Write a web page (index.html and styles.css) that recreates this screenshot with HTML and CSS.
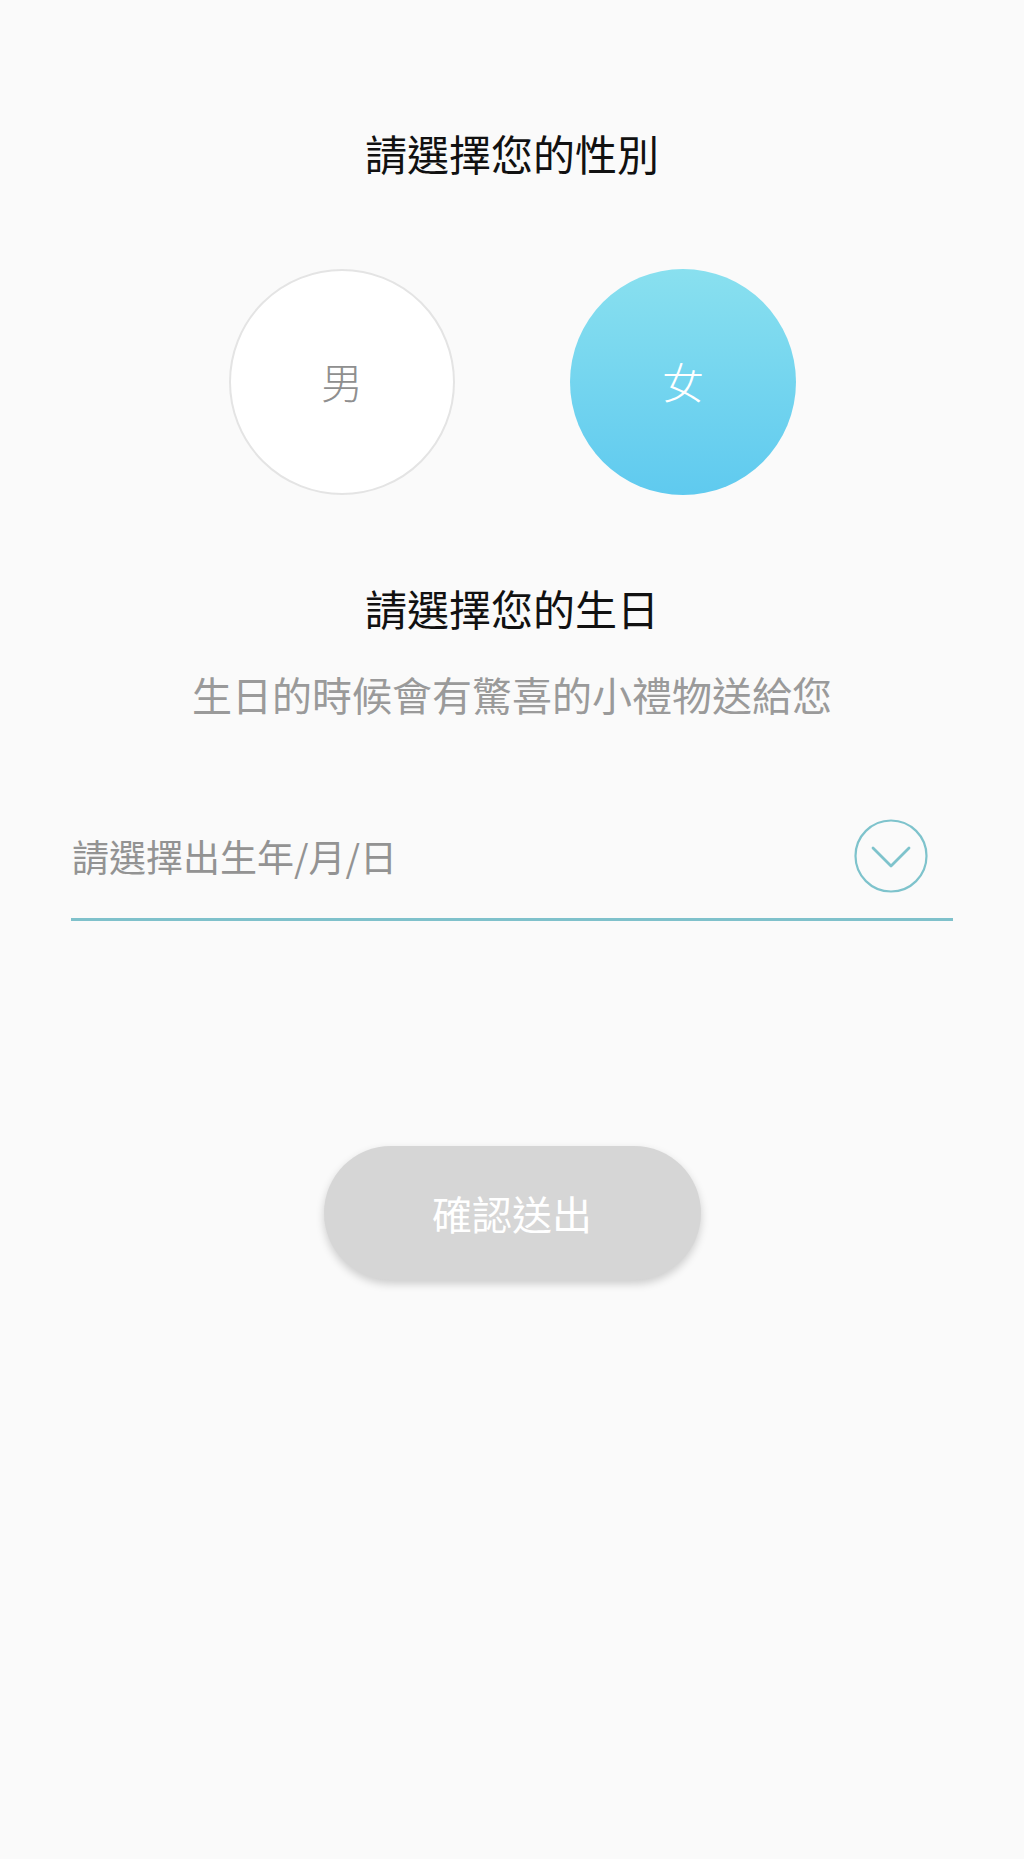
FILE: index.html
```html
<!DOCTYPE html>
<html lang="zh-Hant">
<head>
<meta charset="utf-8">
<title>生日與性別</title>
<link rel="stylesheet" href="styles.css">
</head>
<body>
<main class="page">
  <h1 class="title title-gender">請選擇您的性別</h1>
  <div class="gender-row">
    <button class="gender gender-male" type="button">男</button>
    <button class="gender gender-female" type="button">女</button>
  </div>
  <h2 class="title title-birthday">請選擇您的生日</h2>
  <p class="subtitle">生日的時候會有驚喜的小禮物送給您</p>
  <div class="date-field">
    <span class="date-placeholder">請選擇出生年/月/日</span>
    <span class="date-toggle">
      <svg viewBox="0 0 74 74" width="74" height="74" aria-hidden="true">
        <circle cx="37" cy="37" r="35.5" fill="none" stroke="#7ec3cc" stroke-width="2.2"/>
        <polyline points="19,29 37,47 55,29" fill="none" stroke="#7ec3cc" stroke-width="2.8" stroke-linecap="round" stroke-linejoin="round"/>
      </svg>
    </span>
  </div>
  <button class="submit" type="button">確認送出</button>
</main>
</body>
</html>
```

FILE: styles.css
```css
html, body {
  margin: 0;
  padding: 0;
  background: #fafafa;
}

body {
  font-family: "Noto Sans CJK TC", "Noto Sans CJK SC", "Noto Sans", sans-serif;
  min-height: 1859px;
}

.page {
  display: flex;
  flex-direction: column;
  align-items: center;
}

.title {
  margin: 0;
  font-size: 42px;
  line-height: 60px;
  font-weight: 400;
  color: #111111;
  text-align: center;
}

.title-gender {
  margin-top: 123px;
}

.gender-row {
  display: flex;
  gap: 115px;
  margin-top: 86px;
  padding-left: 1px;
}

.gender {
  width: 226px;
  height: 226px;
  border-radius: 50%;
  font-family: inherit;
  font-size: 42px;
  font-weight: 300;
  display: flex;
  align-items: center;
  justify-content: center;
  padding: 0 0 3px;
  cursor: pointer;
}

.gender-male {
  background: #ffffff;
  border: 2px solid #e4e4e4;
  color: #8f8f8f;
}

.gender-female {
  border: none;
  background: linear-gradient(to bottom, #89e0ef 0%, #5fcaef 100%);
  color: #ffffff;
}

.title-birthday {
  margin-top: 83px;
}

.subtitle {
  margin: 26px 0 0;
  font-size: 40px;
  line-height: 60px;
  color: #9a9a9a;
  text-align: center;
}

.date-field {
  align-self: stretch;
  margin: 95px 71px 0;
  padding: 0 25px 25px 1px;
  border-bottom: 3px solid #7fc1cb;
  display: flex;
  align-items: center;
  justify-content: space-between;
}

.date-placeholder {
  font-size: 37px;
  color: #939393;
  line-height: 74px;
}

.date-toggle {
  display: flex;
  width: 74px;
  height: 74px;
}

.submit {
  margin-top: 225px;
  width: 377px;
  height: 134px;
  border: none;
  border-radius: 67px;
  background: #d6d6d6;
  color: #ffffff;
  font-family: inherit;
  font-size: 40px;
  box-shadow: 0 4px 8px rgba(0, 0, 0, 0.18);
  cursor: pointer;
}
```
